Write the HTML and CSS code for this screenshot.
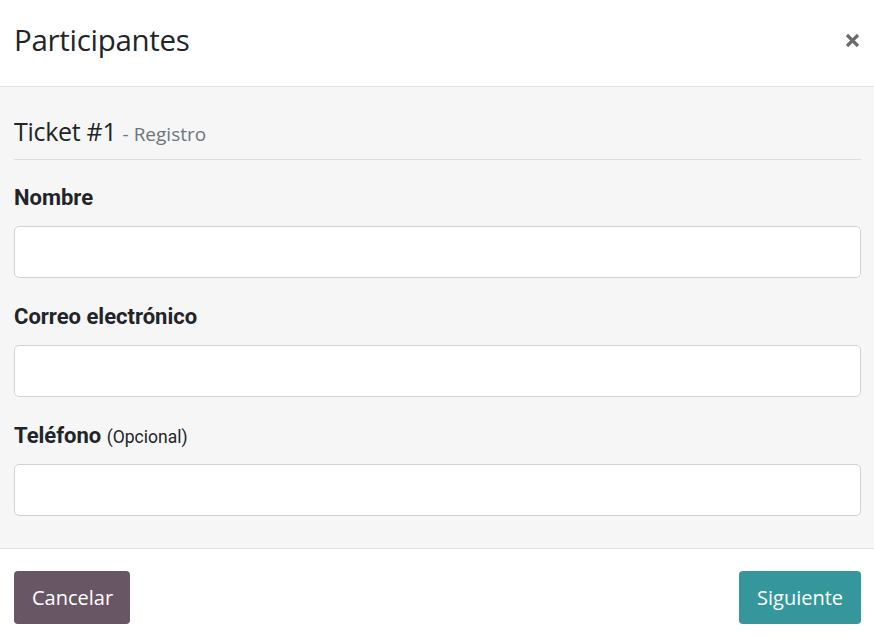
FILE: index.html
```html
<!DOCTYPE html>
<html lang="es">
<head>
<meta charset="utf-8">
<title>Participantes</title>
<link rel="stylesheet" href="styles.css">
</head>
<body>
<div class="modal">
  <header class="modal-header">
    <h1 class="modal-title">Participantes</h1>
    <button class="close" aria-label="Cerrar">
      <svg width="15" height="15" viewBox="0 0 15 15"><path d="M2 2 L13 13 M13 2 L2 13" stroke="#6c6c6c" stroke-width="3.2" stroke-linecap="butt"/></svg>
    </button>
  </header>
  <main class="modal-body">
    <h2 class="ticket-title">Ticket #1 <small>- Registro</small></h2>
    <div class="field">
      <label class="label">Nombre</label>
      <input class="input" type="text">
    </div>
    <div class="field">
      <label class="label">Correo electrónico</label>
      <input class="input" type="email">
    </div>
    <div class="field">
      <label class="label">Teléfono <span class="opt">(Opcional)</span></label>
      <input class="input" type="tel">
    </div>
  </main>
  <footer class="modal-footer">
    <button class="btn btn-secondary">Cancelar</button>
    <button class="btn btn-primary">Siguiente</button>
  </footer>
</div>
</body>
</html>
```
FILE: styles.css
```css
* { box-sizing: border-box; }
html, body { margin: 0; padding: 0; background: #fff; }
body { font-family: Roboto, "Liberation Sans", sans-serif; color: #212529; }
.modal { width: 874px; height: 638px; display: flex; flex-direction: column; }
.modal-header {
  height: 87px;
  display: flex; align-items: center; justify-content: space-between;
  padding: 0 14px 6px 14px;
  border-bottom: 1px solid #dee2e6;
}
.modal-title {
  margin: 0; font-family: "Open Sans", sans-serif; font-weight: 400;
  font-size: 29.5px; line-height: 40px; color: #212529; letter-spacing: -0.3px;
}
.close { border: 0; background: none; padding: 0; width: 15px; height: 15px; display: flex; cursor: pointer; }
.modal-body {
  background: #f6f6f6;
  padding: 27px 13px 32px 14px;
  border-bottom: 1px solid #dee2e6;
}
.ticket-title {
  margin: 0; padding-bottom: 8px; line-height: 34px;
  font-family: "Open Sans", sans-serif; font-weight: 400; font-size: 25px; color: #212529;
  border-bottom: 1px solid #dedede;
  letter-spacing: -0.3px;
}
.ticket-title small { font-size: 19px; color: #6c757d; letter-spacing: 0; }
.field { display: flex; flex-direction: column; margin-top: 25px; }
.field + .field { margin-top: 26px; }
.label { font-weight: 700; font-size: 22px; line-height: 26px; height: 26px; margin-bottom: 15px; color: #212529; }
.opt { font-weight: 400; font-size: 17.5px; line-height: 1; color: #212529; }
.input {
  height: 52px; border: 1px solid #ced4da; border-radius: 5px; background: #fff;
  font-size: 16px; padding: 0 12px;
}
.modal-footer {
  flex: 1; display: flex; justify-content: space-between; align-items: flex-start;
  padding: 22px 13px 0 14px;
}
.btn {
  height: 53px; border: 0; border-radius: 4px; color: #fff;
  font-family: "Open Sans", sans-serif; font-size: 20px; padding: 0 18px;
}
.btn-secondary { background: #685664; width: 116px; }
.btn-primary { background: #35979c; width: 122px; }
```
